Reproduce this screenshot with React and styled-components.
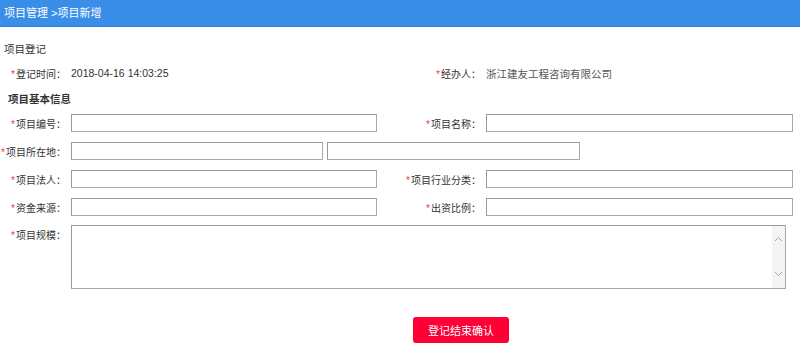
import React from "react";
import styled, { createGlobalStyle } from "styled-components";

const Global = createGlobalStyle`
  html, body { margin: 0; padding: 0; background: #fff; }
  body { font-family: "Liberation Sans", "Noto Sans CJK SC", sans-serif; font-size: 11px; color: #333; }
  * { box-sizing: border-box; }
`;

const Header = styled.div`
  height: 27px;
  background: #3a8ee8;
  border-bottom: 1px solid #2f7fd6;
  color: #fff;
  font-size: 11px;
  line-height: 26px;
  padding-left: 4px;
`;

const Body = styled.div`
  padding: 0;
`;

const SectionTitle = styled.div`
  margin-top: 14px;
  padding-left: 4px;
  line-height: 16px;
  font-size: 10.5px;
`;

const SubTitle = styled.div`
  padding-left: 8px;
  line-height: 18px;
  font-weight: bold;
  font-size: 10.5px;
  margin-top: 8px;
`;

const Grid = styled.div`
  display: grid;
  grid-template-columns: 71px 329px 86px 307px;
  grid-auto-rows: ${(p) => p.$rowH || 18}px;
  row-gap: 10px;
  margin-top: ${(p) => p.$mt || 0}px;
`;

const Label = styled.label`
  display: flex;
  align-items: center;
  justify-content: flex-end;
  padding-right: 5px;
  height: 18px;
  white-space: nowrap;
  font-size: 10px;
  color: #333;
`;

const Star = styled.span`
  color: #e8403c;
  font-size: 10px;
  margin-right: 1px;
  position: relative;
  top: 1px;
`;

const Value = styled.div`
  display: flex;
  align-items: center;
  height: 18px;
  font-size: 10.5px;
  color: ${(p) => (p.$muted ? "#555" : "#333")};
`;

const Input = styled.input`
  width: ${(p) => p.$w}px;
  height: 18px;
  border: 1px solid #a8a8a8;
  border-top-color: #9a9a9a;
  border-left-color: #9a9a9a;
  padding: 0 3px;
  margin: 0;
  font: inherit;
  outline: none;
  background: #fff;
`;

const Span3 = styled.div`
  grid-column: span 3;
  display: flex;
  gap: 4px;
`;

const AreaBox = styled.div`
  grid-column: span 3;
  width: 715px;
  height: 64px;
  border: 1px solid #a8a8a8;
  border-top-color: #9a9a9a;
  border-left-color: #9a9a9a;
  display: flex;
`;

const TextArea = styled.textarea`
  flex: 1;
  border: none;
  resize: none;
  outline: none;
  font: inherit;
  padding: 2px;
  margin: 0;
  overflow: hidden;
`;

const ScrollBar = styled.div`
  width: 13px;
  background: #f4f4f4;
  display: flex;
  flex-direction: column;
  justify-content: space-between;
  align-items: center;
  padding: 10px 0 11px;
`;

const Actions = styled.div`
  padding-left: 413px;
  margin-top: 28px;
`;

const Button = styled.button`
  width: 96px;
  height: 26px;
  border: none;
  border-radius: 3px;
  background: #ff0036;
  color: #fff;
  font-family: "Liberation Sans", "Noto Sans CJK SC", sans-serif;
  font-size: 11px;
  cursor: pointer;
  padding: 0;
`;

const Chevron = ({ up }) => (
  <svg width="9" height="6" viewBox="0 0 9 6">
    <path
      d={up ? "M1 5 L4.5 1.5 L8 5" : "M1 1 L4.5 4.5 L8 1"}
      fill="none"
      stroke="#a8a8a8"
      strokeWidth="1"
    />
  </svg>
);

const Req = ({ children }) => (
  <Label>
    <Star>*</Star>
    {children}
  </Label>
);

export default function App() {
  return (
    <>
      <Global />
      <Header>项目管理 &gt;项目新增</Header>
      <Body>
        <SectionTitle>项目登记</SectionTitle>
        <Grid $mt={7}>
          <Req>登记时间：</Req>
          <Value>2018-04-16 14:03:25</Value>
          <Req>经办人：</Req>
          <Value $muted>浙江建友工程咨询有限公司</Value>
        </Grid>
        <SubTitle>项目基本信息</SubTitle>
        <Grid $mt={6}>
          <Req>项目编号：</Req>
          <div><Input $w={306} /></div>
          <Req>项目名称：</Req>
          <div><Input $w={307} /></div>

          <Req>项目所在地：</Req>
          <Span3>
            <Input $w={252} />
            <Input $w={253} />
          </Span3>

          <Req>项目法人：</Req>
          <div><Input $w={306} /></div>
          <Req>项目行业分类：</Req>
          <div><Input $w={307} /></div>

          <Req>资金来源：</Req>
          <div><Input $w={306} /></div>
          <Req>出资比例：</Req>
          <div><Input $w={307} /></div>
        </Grid>
        <Grid $mt={9} $rowH={64}>
          <Req>项目规模：</Req>
          <AreaBox>
            <TextArea />
            <ScrollBar>
              <Chevron up />
              <Chevron />
            </ScrollBar>
          </AreaBox>
        </Grid>
        <Actions>
          <Button>登记结束确认</Button>
        </Actions>
      </Body>
    </>
  );
}
